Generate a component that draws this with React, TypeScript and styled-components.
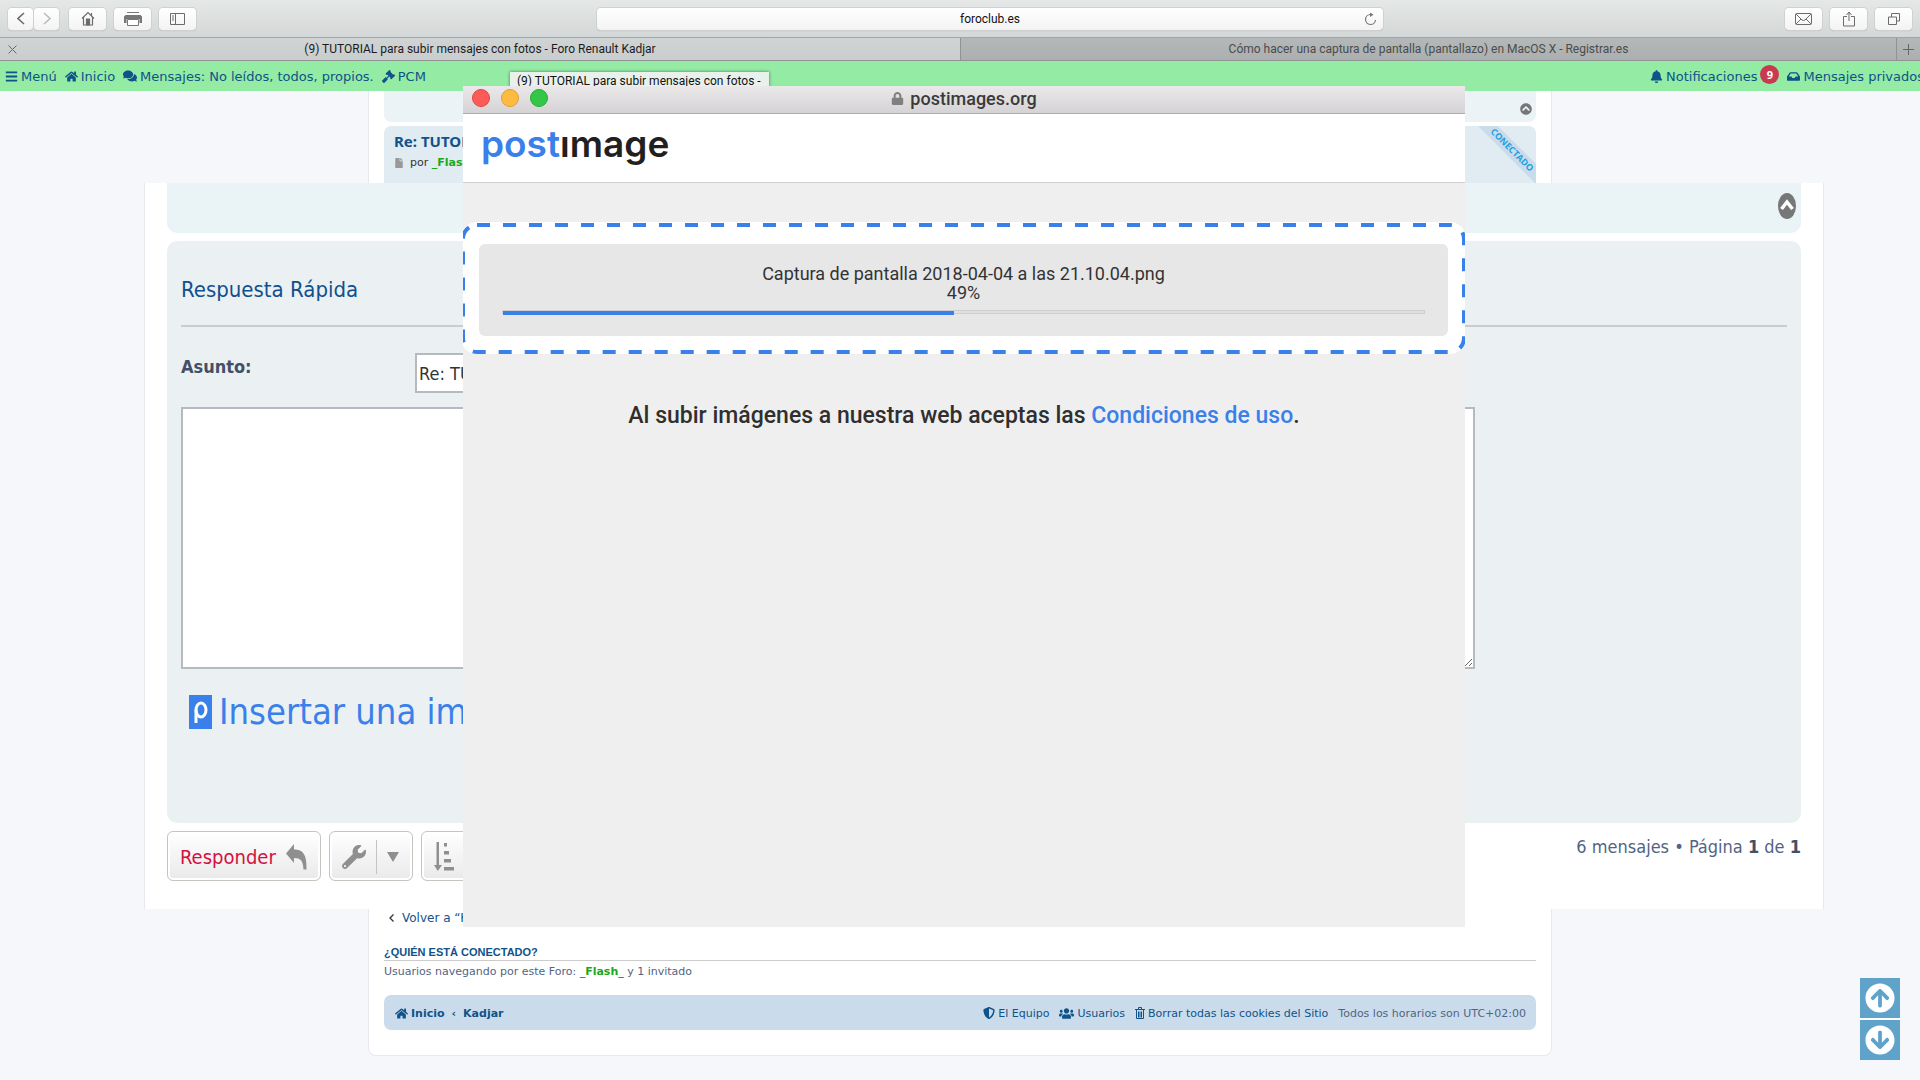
import React from "react";
import styled, { createGlobalStyle, css } from "styled-components";
import {
  FaBars,
  FaHome,
  FaComments,
  FaGavel,
  FaBell,
  FaInbox,
  FaFile,
  FaUsers,
  FaShieldAlt,
  FaChevronCircleUp,
  FaArrowCircleUp,
  FaArrowCircleDown,
  FaWrench,
  FaLock,
} from "react-icons/fa";

const system = `Roboto, "Liberation Sans", sans-serif`;
const verdana = `"DejaVu Sans", Verdana, sans-serif`;
const narrow = `"DejaVu Sans Condensed", "Noto Sans", sans-serif`;

const GlobalStyle = createGlobalStyle`
  *, *::before, *::after { box-sizing: border-box; }
  body { margin: 0; background: #f5f7fa; font-family: ${verdana}; overflow: hidden; }
  a { color: inherit; text-decoration: none; }
  button { margin: 0; padding: 0; border: 0; background: none; font: inherit; color: inherit; }
  h1, h2, h3, p { margin: 0; }
  svg { display: block; flex: none; }
`;

const Screen = styled.div`
  position: relative;
  display: flex;
  flex-direction: column;
  height: 100vh;
  overflow: hidden;
`;

/* ---------- Browser chrome ---------- */

const Toolbar = styled.header`
  display: grid;
  grid-template-columns: 589fr 786fr 529fr;
  align-items: center;
  height: 37px;
  flex: none;
  padding: 0 8px;
  background: linear-gradient(#e6e8e8, #d4d7d7);
`;

const ToolGroup = styled.div<{ $end?: boolean }>`
  display: flex;
  gap: 8px;
  justify-content: ${(p) => (p.$end ? "flex-end" : "flex-start")};
`;

const Pair = styled.div`
  display: flex;
  gap: 1px;
  margin-right: 2px;
`;

const ToolButton = styled.button<{ $small?: boolean; $faded?: boolean }>`
  display: flex;
  align-items: center;
  justify-content: center;
  width: ${(p) => (p.$small ? 25 : 37)}px;
  height: 22px;
  border-radius: 4px;
  background: linear-gradient(#ffffff, #f3f3f3);
  box-shadow: 0 0 0 1px #cfd1d1, 0 1px 1px #a9abab;
  color: ${(p) => (p.$faded ? "#bdbdbd" : "#6c6c6c")};
`;

const AddressBar = styled.div`
  position: relative;
`;

const AddressInput = styled.input`
  display: block;
  width: 100%;
  height: 22px;
  padding: 0 30px;
  border: 0;
  border-radius: 4px;
  background: linear-gradient(#ffffff, #f3f3f3);
  box-shadow: 0 0 0 1px #cfd1d1, 0 1px 1px #a9abab;
  font: 12px ${system};
  text-align: center;
  color: #111;
`;

const Reload = styled.button`
  position: absolute;
  right: 6px;
  top: 4px;
  color: #777;
`;

const Tabs = styled.nav`
  display: grid;
  grid-template-columns: 960fr 936fr 24px;
  height: 24px;
  flex: none;
  border-top: 1px solid #a2a6a6;
  border-bottom: 1px solid #8f9393;
`;

const Tab = styled.button<{ $active?: boolean }>`
  position: relative;
  font: 12px/22px ${system};
  text-align: center;
  ${(p) =>
    p.$active
      ? css`
          background: linear-gradient(#d1d4d4, #c9cdcd);
          color: #1c1c1c;
        `
      : css`
          background: linear-gradient(#b4b8b8, #abafaf);
          border-left: 1px solid #8f9393;
          color: #4a4c4c;
        `}
`;

const TabIcon = styled.span`
  position: absolute;
  left: 8px;
  top: 7px;
  color: #666;
`;

const NewTab = styled(Tab)`
  display: flex;
  align-items: center;
  justify-content: center;
  color: #666;
`;

/* ---------- Forum page ---------- */

const ForumNav = styled.nav`
  display: flex;
  justify-content: space-between;
  align-items: center;
  height: 30px;
  flex: none;
  padding-left: 5px;
  background: #93eba4;
  color: #105289;
  font-size: 13px;
  white-space: nowrap;
`;

const NavGroup = styled.div<{ $bleed?: boolean }>`
  display: flex;
  gap: ${(p) => (p.$bleed ? 6 : 8)}px;
  margin-right: ${(p) => (p.$bleed ? -4 : 0)}px;
`;

const IconLink = styled.a`
  display: flex;
  align-items: center;
  gap: 3px;
`;

const Badge = styled.span`
  width: 19px;
  height: 19px;
  margin: 0 2px 4px 0;
  border-radius: 10px;
  background: #c9394f;
  color: #fff;
  font: bold 11px/19px "Open Sans", sans-serif;
  text-align: center;
`;

const Wrap = styled.main`
  display: flex;
  flex-direction: column;
  flex: 1;
  width: 1184px;
  max-width: 100%;
  margin: 0 auto 24px;
  padding: 0 15px 25px;
  border: 1px solid #e6e9ed;
  border-top: 0;
  border-radius: 0 0 8px 8px;
  background: #fff;
`;

const PreviousPost = styled.div`
  display: flex;
  justify-content: flex-end;
  align-items: center;
  height: 31px;
  padding: 5px 4px 0;
  border-radius: 0 0 7px 7px;
  background: #ecf3f7;
  color: #777;
`;

const Post = styled.article`
  position: relative;
  overflow: hidden;
  flex: 1;
  margin-top: 4px;
  padding: 5px 10px;
  border-radius: 7px;
  background: #e1ebf2;
`;

const PostTitle = styled.h3`
  font: bold 15px/20px "Noto Sans", sans-serif;
  color: #105289;
`;

const PostMeta = styled.p`
  display: flex;
  align-items: center;
  gap: 6px;
  padding-top: 1px;
  font-size: 11px;
  line-height: 22px;
  color: #333;
`;

const UserName = styled.a`
  font-weight: bold;
  color: #1aa81a;
`;

const Ribbon = styled.span`
  position: absolute;
  top: 17px;
  right: -36px;
  width: 120px;
  background: #cadceb;
  color: #1ba1e2;
  font: bold 9px/14px "Open Sans", sans-serif;
  text-align: center;
  transform: rotate(45deg);
`;

const BackLink = styled.a`
  display: flex;
  align-items: center;
  gap: 8px;
  margin: 21px 0 0 5px;
  font-size: 12px;
  line-height: 20px;
  color: #105289;
`;

const OnlineTitle = styled.h3`
  margin-top: 17px;
  border-bottom: 1px solid #ccc;
  font: bold 11px/15px "Liberation Sans", Arial, sans-serif;
  color: #105289;
`;

const OnlineText = styled.p`
  font-size: 11px;
  line-height: 22px;
  color: #536482;
`;

const FooterBar = styled.footer`
  display: flex;
  justify-content: space-between;
  align-items: center;
  height: 35px;
  margin-top: 12px;
  padding: 1px 10px 0 11px;
  border-radius: 7px;
  background: #cadceb;
  color: #105289;
  font-size: 11px;
`;

const FooterGroup = styled.div<{ $bold?: boolean }>`
  display: flex;
  align-items: center;
  gap: ${(p) => (p.$bold ? 7 : 10)}px;
  font-weight: ${(p) => (p.$bold ? "bold" : "normal")};
`;

const Muted = styled.span`
  color: #536482;
`;

const Scrollers = styled.div`
  position: fixed;
  right: 20px;
  bottom: 20px;
  display: grid;
  gap: 2px;
  background: #fff;
`;

const ScrollButton = styled.button`
  display: grid;
  place-items: center;
  width: 40px;
  height: 40px;
  background: #5fa3ca;
  color: #fff;
`;

const Tooltip = styled.div`
  position: absolute;
  left: 510px;
  top: 72px;
  width: 259px;
  height: 30px;
  padding: 0 7px;
  background: #e9f1ec;
  box-shadow: 0 0 3px rgba(0, 0, 0, 0.5);
  font: 12px/19px ${system};
  color: #111;
  white-space: nowrap;
`;

/* ---------- Enlarged reply area ---------- */

const ReplyView = styled.section`
  position: absolute;
  left: 144px;
  right: 96px;
  top: 183px;
  padding: 0 22px 28px;
  border: solid #e6e9ed;
  border-width: 0 1px;
  background: #fff;
  font-family: ${narrow};
`;

const StripPanel = styled.div`
  display: flex;
  justify-content: flex-end;
  align-items: center;
  height: 50px;
  padding: 0 5px 4px;
  border-radius: 0 0 10px 10px;
  background: #eaf3f6;
  color: #777;
`;

const ReplyForm = styled.form`
  margin-top: 8px;
  padding: 32px 14px 0;
  height: 582px;
  border-radius: 10px;
  background: #ebf0f3;
`;

const ReplyTitle = styled.h2`
  padding-bottom: 18px;
  border-bottom: 2px solid #ccc;
  font-size: 22px;
  line-height: 34px;
  font-weight: normal;
  color: #10508f;
`;

const Field = styled.div`
  display: flex;
  padding-top: 26px;
`;

const Label = styled.label`
  width: 234px;
  font-size: 18px;
  line-height: 28px;
  font-weight: bold;
  color: #425067;
`;

const Subject = styled.input`
  width: 700px;
  height: 40px;
  padding: 0 2px;
  border: 2px solid #b4bac0;
  background: #fff;
  font: 18px ${narrow};
  color: #333;
`;

const Message = styled.textarea`
  display: block;
  width: 1294px;
  max-width: 100%;
  height: 262px;
  margin-top: 14px;
  border: 2px solid #b4bac0;
  background: #fff;
`;

const InsertLink = styled.a`
  display: flex;
  align-items: center;
  gap: 7px;
  padding: 18px 8px;
  font-size: 36px;
  line-height: 50px;
  color: #3a80ea;
  white-space: nowrap;
`;

const ActionBar = styled.div`
  display: flex;
  gap: 8px;
  padding-top: 8px;
`;

const ActionButton = styled.button<{ $width: number }>`
  display: flex;
  align-items: center;
  justify-content: space-between;
  width: ${(p) => p.$width}px;
  height: 50px;
  padding: 2px 13px 0 12px;
  border: 1px solid #c7c3bf;
  border-radius: 6px;
  background: linear-gradient(#ffffff, #e9e9e9);
  box-shadow: inset 0 0 0 2px #fff;
  font-size: 20px;
  color: #d31141;
`;

const Divider = styled.span`
  width: 1px;
  height: 34px;
  background: #c7c3bf;
`;

const PageCount = styled.p`
  margin-left: auto;
  font-size: 18px;
  line-height: 32px;
  color: #536482;

  strong {
    color: #425067;
  }
`;

/* ---------- Upload pop-up ---------- */

const Popup = styled.section`
  position: absolute;
  left: 463px;
  top: 86px;
  width: 1002px;
  height: 841px;
  overflow: hidden;
  background: #efefef;
  font-family: ${system};
`;

const TitleBar = styled.header`
  display: grid;
  grid-template-columns: 1fr auto 1fr;
  align-items: center;
  height: 28px;
  padding: 0 9px;
  border-bottom: 1px solid #aeacae;
  background: linear-gradient(#ebe8ea, #d5d3d5);
`;

const Lights = styled.div`
  display: flex;
  gap: 11px;
  padding-bottom: 3px;
`;

const Light = styled.button<{ $fill: string; $edge: string }>`
  width: 18px;
  height: 18px;
  border: 1px solid ${(p) => p.$edge};
  border-radius: 50%;
  background: ${(p) => p.$fill};
`;

const WindowTitle = styled.h1`
  display: flex;
  align-items: center;
  gap: 6px;
  padding-bottom: 2px;
  font-size: 18px;
  line-height: 25px;
  font-weight: 500;
  color: #3a3a3a;

  svg {
    color: #808080;
  }
`;

const Masthead = styled.div`
  height: 69px;
  padding: 8px 18px;
  border-bottom: 1px solid #d0d0d0;
  background: #fff;
`;

const Logo = styled.a`
  font: 600 37px/44px Inter, sans-serif;
  color: #231f20;

  span {
    color: #3a80ea;
  }
`;

const DropZone = styled.div`
  position: relative;
  margin: 39px -1px 0 -2px;
  padding: 22px 18px 18px;
  border-radius: 16px;
  background: #fff;
`;

const Dashes = styled.svg`
  position: absolute;
  inset: 0;
  width: 100%;
  height: 100%;

  rect {
    x: 2px;
    y: 3px;
    width: calc(100% - 4px);
    height: calc(100% - 5px);
  }
`;

const UploadCard = styled.div`
  position: relative;
  height: 92px;
  padding: 20px 23px;
  border-radius: 6px;
  background: #e7e7e7;
  font-size: 18px;
  line-height: 19px;
  text-align: center;
  color: #333;
`;

const Track = styled.div`
  height: 4px;
  margin-top: 8px;
  border: 1px solid #cfcfcf;
  background: #e0e0e0;
`;

const Fill = styled.div`
  height: 4px;
  background: #3a80ea;
`;

const Terms = styled.p`
  margin-top: 44px;
  font-size: 23px;
  line-height: 36px;
  font-weight: 500;
  text-align: center;
  color: #2f2f2f;

  a {
    color: #3a80ea;
  }
`;

/* ---------- Drawings ---------- */

const line = { fill: "none", stroke: "currentColor" };

const Chevron = ({ flip }: { flip?: boolean }) => (
  <svg width="8" height="13" viewBox="0 0 8 13" {...line} strokeWidth="1.6">
    <path d={flip ? "M1 1l6 5.500-6 5.500" : "M7 1L1 6.500l6 5.500"} />
  </svg>
);

const HouseIcon = () => (
  <svg width="14" height="15" viewBox="0 0 14 15" {...line} strokeWidth="1.200">
    <path d="M1 7.500L7 1.500l6 6M2.500 6.500V14h9V6.500M10.500 4.500V2" />
    <path d="M5.500 8h3v6h-3z" fill="currentColor" />
  </svg>
);

const PrinterIcon = () => (
  <svg width="18" height="14" viewBox="0 0 18 14">
    <path d="M3 .5h12" stroke="#777" />
    <path d="M1.500 3h15L18 4.500V11h-2.500V7h-13v4H0V4.500z" fill="#777" />
    <path d="M3.500 7.500h11v6h-11z" fill="#fff" stroke="#777" />
  </svg>
);

const SidebarIcon = () => (
  <svg width="15" height="12" viewBox="0 0 15 12" {...line}>
    <path d="M.5.5h14v11H.5zM5.500.5v11M2 3h2M2 5h2M2 7h2" />
  </svg>
);

const ReloadIcon = () => (
  <svg width="13" height="14" viewBox="0 0 13 14" {...line} strokeWidth="1.200">
    <path d="M6.500 2.500A5 5 0 1 0 11.500 8" />
    <path d="M6 .5L9.500 2.700 6 5z" fill="currentColor" stroke="none" />
  </svg>
);

const MailIcon = () => (
  <svg width="17" height="12" viewBox="0 0 17 12" {...line}>
    <rect x=".5" y=".5" width="16" height="11" rx="1" />
    <path d="M1 1l6 6q1.500 1 3 0l6-6M1 11l5-5M16 11l-5-5" />
  </svg>
);

const ShareIcon = () => (
  <svg width="12" height="16" viewBox="0 0 12 16" {...line}>
    <path d="M4 5.500H.5v9.500h11V5.500H8M6 10V1.500M3.500 4L6 1l2.500 3" />
  </svg>
);

const WindowsIcon = () => (
  <svg width="12" height="12" viewBox="0 0 12 12" {...line}>
    <path d="M.5 4h8v7.500h-8zM3.500 4V.5h8V8h-3" />
  </svg>
);

const TrashIcon = () => (
  <svg width="10" height="12" viewBox="0 0 10 12" fill="none" stroke="currentColor">
    <path d="M0 2.500h10M3.500 2V.5h3V2" />
    <path d="M1.500 3v8.500h7V3M3.500 4.500v6M5 4.500v6M6.500 4.500v6" />
  </svg>
);

const ReplyIcon = () => (
  <svg width="21" height="26" viewBox="0 0 21 26" fill="#8f8f8f">
    <path d="M0 9.500L8 0v5.500c9 0 13 5 12.500 20h-3C17 17 15 14 8 14v5z" />
  </svg>
);

const SortIcon = () => (
  <svg width="20" height="30" viewBox="0 0 20 30" fill="#8f8f8f">
    <path d="M2.500 0h2.500v23h3l-4.200 6L0 23h2.500zM10 1h3v3.500h-3zM10 9h5v3.500h-5zM10 17h7v3.500h-7zM10 25h10v3.500H10z" />
  </svg>
);

const CaretIcon = () => (
  <svg width="12" height="10" viewBox="0 0 12 10" fill="#8f8f8f">
    <path d="M0 0h12L6 10z" />
  </svg>
);

const PostimageIcon = () => (
  <svg width="23" height="34" viewBox="0 0 23 34">
    <path d="M0 0h23v34H0z" fill="#3a80ea" />
    <ellipse cx="12" cy="15" rx="5" ry="7" fill="none" stroke="#fff" strokeWidth="3" />
    <path d="M7 15v13" stroke="#fff" strokeWidth="3" />
  </svg>
);

export default function App() {
  const progress = 49;

  return (
    <Screen>
      <GlobalStyle />

      <Toolbar>
        <ToolGroup>
          <Pair>
            <ToolButton $small aria-label="Atrás"><Chevron /></ToolButton>
            <ToolButton $small $faded aria-label="Adelante"><Chevron flip /></ToolButton>
          </Pair>
          <ToolButton aria-label="Inicio"><HouseIcon /></ToolButton>
          <ToolButton aria-label="Imprimir"><PrinterIcon /></ToolButton>
          <ToolButton aria-label="Barra lateral"><SidebarIcon /></ToolButton>
        </ToolGroup>
        <AddressBar>
          <AddressInput aria-label="Dirección" defaultValue="foroclub.es" />
          <Reload aria-label="Recargar"><ReloadIcon /></Reload>
        </AddressBar>
        <ToolGroup $end>
          <ToolButton aria-label="Correo"><MailIcon /></ToolButton>
          <ToolButton aria-label="Compartir"><ShareIcon /></ToolButton>
          <ToolButton aria-label="Pestañas"><WindowsIcon /></ToolButton>
        </ToolGroup>
      </Toolbar>

      <Tabs>
        <Tab $active>
          <TabIcon>
            <svg width="9" height="9" viewBox="0 0 9 9" {...line}><path d="M.5.5l8 8M8.500.5l-8 8" /></svg>
          </TabIcon>
          (9) TUTORIAL para subir mensajes con fotos - Foro Renault Kadjar
        </Tab>
        <Tab>Cómo hacer una captura de pantalla (pantallazo) en MacOS X - Registrar.es</Tab>
        <NewTab aria-label="Nueva pestaña">
          <svg width="11" height="11" viewBox="0 0 11 11" {...line}><path d="M5.500 0v11M0 5.500h11" /></svg>
        </NewTab>
      </Tabs>

      <ForumNav>
        <NavGroup>
          <IconLink href="#menu"><FaBars size={13} />Menú</IconLink>
          <IconLink href="#inicio"><FaHome size={13} />Inicio</IconLink>
          <IconLink href="#mensajes"><FaComments size={14} />Mensajes: No leídos, todos, propios.</IconLink>
          <IconLink href="#pcm"><FaGavel size={13} />PCM</IconLink>
        </NavGroup>
        <NavGroup $bleed>
          <IconLink href="#notificaciones"><FaBell size={13} />Notificaciones<Badge>9</Badge></IconLink>
          <IconLink href="#privados"><FaInbox size={13} />Mensajes privados</IconLink>
        </NavGroup>
      </ForumNav>

      <Wrap>
        <PreviousPost><FaChevronCircleUp size={12} /></PreviousPost>
        <Post>
          <PostTitle>Re: TUTOR</PostTitle>
          <PostMeta><FaFile size={10} color="#999" /><span>por <UserName href="#flash">_Flash_</UserName></span></PostMeta>
          <Ribbon>CONECTADO</Ribbon>
        </Post>
        <BackLink href="#volver">
          <svg width="5" height="8" viewBox="0 0 5 8" fill="none" stroke="#333" strokeWidth="1.300"><path d="M4.500.5L1 4l3.500 3.500" /></svg>
          Volver a “Kadjar”
        </BackLink>
        <OnlineTitle>¿QUIÉN ESTÁ CONECTADO?</OnlineTitle>
        <OnlineText>
          Usuarios navegando por este Foro: <UserName href="#flash">_Flash_</UserName> y 1 invitado
        </OnlineText>
        <FooterBar>
          <FooterGroup $bold>
            <IconLink href="#inicio"><FaHome size={13} />Inicio</IconLink>
            <span>‹</span>
            <a href="#kadjar">Kadjar</a>
          </FooterGroup>
          <FooterGroup>
            <IconLink href="#equipo"><FaShieldAlt size={12} />El Equipo</IconLink>
            <IconLink href="#usuarios"><FaUsers size={15} />Usuarios</IconLink>
            <IconLink href="#cookies"><TrashIcon />Borrar todas las cookies del Sitio</IconLink>
            <Muted>Todos los horarios son UTC+02:00</Muted>
          </FooterGroup>
        </FooterBar>
      </Wrap>

      <Scrollers>
        <ScrollButton aria-label="Subir"><FaArrowCircleUp size={30} /></ScrollButton>
        <ScrollButton aria-label="Bajar"><FaArrowCircleDown size={30} /></ScrollButton>
      </Scrollers>

      <Tooltip role="tooltip">(9) TUTORIAL para subir mensajes con fotos -</Tooltip>

      <ReplyView>
        <StripPanel>
          <svg width="18" height="26" viewBox="0 0 18 26">
            <ellipse cx="9" cy="13" rx="9" ry="13" fill="#777" />
            <path d="M3.500 16L9 9l5.500 7" fill="none" stroke="#fff" strokeWidth="3.500" />
          </svg>
        </StripPanel>
        <ReplyForm onSubmit={(e) => e.preventDefault()}>
          <ReplyTitle>Respuesta Rápida</ReplyTitle>
          <Field>
            <Label htmlFor="subject">Asunto:</Label>
            <Subject id="subject" defaultValue="Re: TUTORIAL para subir mensajes con fotos" />
          </Field>
          <Message aria-label="Mensaje" />
          <InsertLink href="#insertar"><PostimageIcon />Insertar una imagen</InsertLink>
        </ReplyForm>
        <ActionBar>
          <ActionButton $width={154}>Responder<ReplyIcon /></ActionButton>
          <ActionButton $width={84} aria-label="Herramientas">
            <FaWrench size={24} color="#8f8f8f" />
            <Divider />
            <CaretIcon />
          </ActionButton>
          <ActionButton $width={84} aria-label="Ordenar">
            <SortIcon />
            <Divider />
            <CaretIcon />
          </ActionButton>
          <PageCount>6 mensajes • Página <strong>1</strong> de <strong>1</strong></PageCount>
        </ActionBar>
      </ReplyView>

      <Popup>
        <TitleBar>
          <Lights>
            <Light $fill="#fc5b57" $edge="#e2463f" aria-label="Cerrar" />
            <Light $fill="#fdbc40" $edge="#e0a030" aria-label="Minimizar" />
            <Light $fill="#33c748" $edge="#27aa35" aria-label="Ampliar" />
          </Lights>
          <WindowTitle><FaLock size={13} />postimages.org</WindowTitle>
        </TitleBar>
        <Masthead>
          <Logo href="#postimage" aria-label="postimage"><span>post</span>ımage</Logo>
        </Masthead>
        <DropZone>
          <Dashes aria-hidden="true">
            <rect rx="14" fill="none" stroke="#3a80ea" strokeWidth="4" strokeDasharray="13 13" />
          </Dashes>
          <UploadCard>
            <p>Captura de pantalla 2018-04-04 a las 21.10.04.png</p>
            <p>{progress}%</p>
            <Track role="progressbar" aria-label="Subida" aria-valuenow={progress}>
              <Fill style={{ width: `${progress}%` }} />
            </Track>
          </UploadCard>
        </DropZone>
        <Terms>
          Al subir imágenes a nuestra web aceptas las <a href="#condiciones">Condiciones de uso</a>.
        </Terms>
      </Popup>
    </Screen>
  );
}
